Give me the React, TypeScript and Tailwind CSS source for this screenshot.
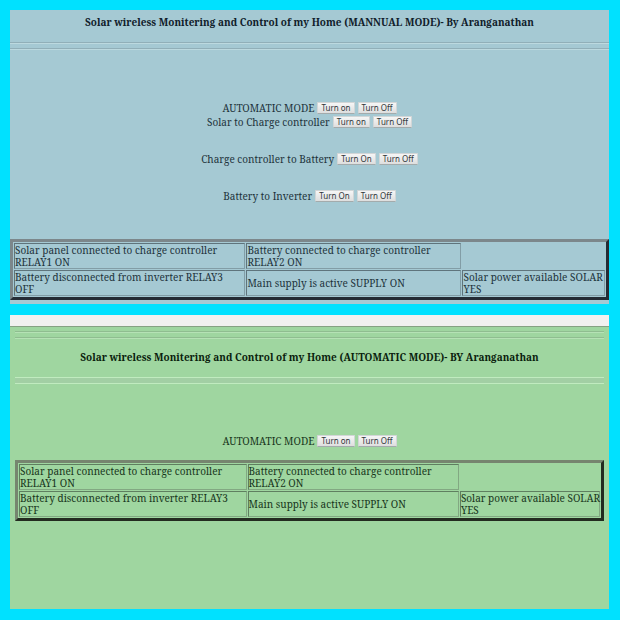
type RowProps = { label: string; on?: string };

const serif = "font-['Noto_Serif','DejaVu_Serif_Condensed',serif]";

const buttonClass =
  "h-3 rounded-[1px] border border-[#d2d6d7] border-b-[#a3abac] bg-linear-to-b from-[#f6f6f6] to-[#dedede] px-[3px] font-['Noto_Sans',sans-serif] text-[8px] leading-[10px] text-[#30363a]";

function ControlRow({ label, on = "Turn on" }: RowProps) {
  return (
    <div className="flex h-[14px] items-center justify-center gap-[3px]" role="group" aria-label={label}>
      <span className="whitespace-nowrap">{label}</span>
      <button type="button" className={buttonClass}>{on}</button>
      <button type="button" className={buttonClass}>Turn Off</button>
    </div>
  );
}

type TableProps = { frame: string; cell: string };

function StatusTable({ frame, cell }: TableProps) {
  const td = `h-[26px] border p-0 align-middle ${cell}`;
  return (
    <table className={`w-full table-fixed border-separate border-spacing-px border-[3px] text-left leading-3 whitespace-nowrap ${frame}`}>
      <colgroup>
        <col className="w-[39.3%]" />
        <col className="w-[36.5%]" />
        <col />
      </colgroup>
      <tbody>
        <tr>
          <td className={td}>Solar panel connected to charge controller<br />RELAY1 ON</td>
          <td className={td}>Battery connected to charge controller<br />RELAY2 ON</td>
          <td className="p-0" />
        </tr>
        <tr>
          <td className={td}>Battery disconnected from inverter RELAY3<br />OFF</td>
          <td className={td}>Main supply is active SUPPLY ON</td>
          <td className={td}>Solar power available SOLAR<br />YES</td>
        </tr>
      </tbody>
    </table>
  );
}

export default function App() {
  return (
    <main className={`flex min-h-screen flex-col gap-[11px] bg-[#00e1ff] pt-[10px] pr-[11px] pb-[11px] pl-[10px] text-[10px] ${serif}`}>
      <section className="bg-[#a5c9d3] pb-1 text-[#1d333b]">
        <h1 className="pt-1 text-center text-[10px] leading-4 font-bold text-[#10202a]">
          Solar wireless Monitering and Control of my Home (MANNUAL MODE)- By Aranganathan
        </h1>
        <hr className="mt-3 border-t border-b border-t-[#91afb8] border-b-[#bcd9df]" />
        <hr className="mt-1 border-t border-b border-t-[#91afb8] border-b-[#bcd9df]" />
        <div className="pt-[51px] pb-9">
          <ControlRow label="AUTOMATIC MODE" />
          <ControlRow label="Solar to Charge controller" />
          <div className="mt-[23px] flex flex-col gap-[23px]">
            <ControlRow label="Charge controller to Battery" on="Turn On" />
            <ControlRow label="Battery to Inverter" on="Turn On" />
          </div>
        </div>
        <StatusTable
          frame="border-t-[#7c878b] border-l-[#7c878b] border-r-[#252c35] border-b-[#252c35]"
          cell="border-t-[#5f747c] border-l-[#5f747c] border-r-[#829da6] border-b-[#829da6]"
        />
      </section>

      <section className="flex flex-1 flex-col bg-[#9fd6a0] text-[#17351b]">
        <div className="h-3 border-b border-[#86a283] bg-[#f1f1ef]" />
        <div className="px-[5px] pt-1">
          <hr className="border-t border-b border-t-[#8fbd90] border-b-[#b5e2b5]" />
          <hr className="mt-1 border-t border-b border-t-[#8fbd90] border-b-[#b5e2b5]" />
          <h2 className="mt-[10px] text-center text-[10px] leading-4 font-bold text-[#0b1f0e]">
            Solar wireless Monitering and Control of my Home (AUTOMATIC MODE)- BY Aranganathan
          </h2>
          <div className="mt-3 h-[7px] border-t border-b border-[#c0ebbf] bg-[#a2cfa4]" />
          <div className="pt-[50px] pb-3">
            <ControlRow label="AUTOMATIC MODE" />
          </div>
          <StatusTable
            frame="border-t-[#76856f] border-l-[#76856f] border-r-[#232c20] border-b-[#232c20]"
            cell="border-t-[#5f7f60] border-l-[#5f7f60] border-r-[#82a882] border-b-[#82a882]"
          />
        </div>
      </section>
    </main>
  );
}
